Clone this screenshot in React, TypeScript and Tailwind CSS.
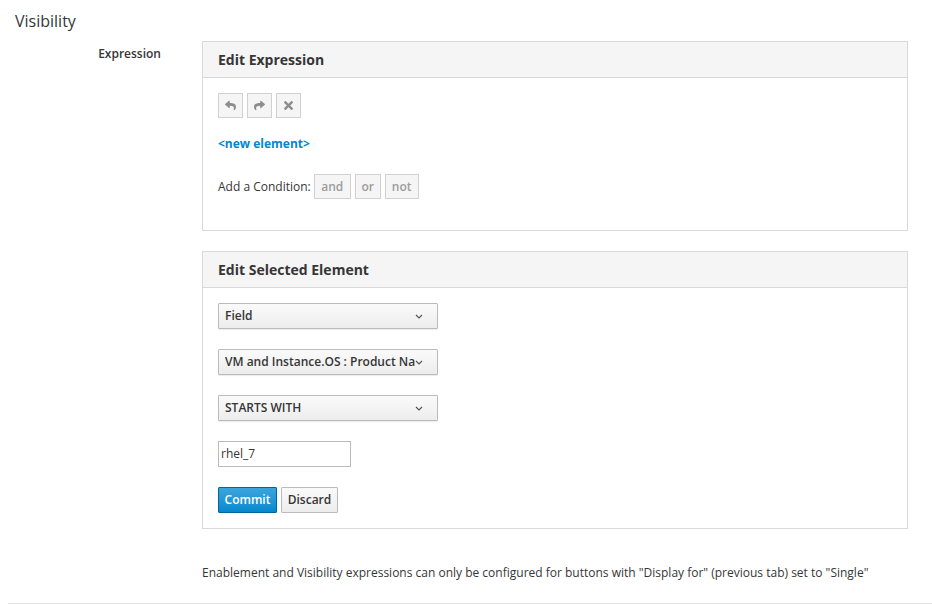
import { FaReply, FaShare, FaTimes } from "react-icons/fa";

const font = { fontFamily: '"Open Sans", "Liberation Sans", sans-serif' };

function Chevron() {
  return (
    <svg width="8" height="5" viewBox="0 0 8 5" className="shrink-0">
      <path d="M1 1 L4 4 L7 1" fill="none" stroke="#4d5258" strokeWidth="1.1" />
    </svg>
  );
}

function Dropdown({ label }: { label: string }) {
  return (
    <div className="flex h-[26px] w-[220px] items-center justify-between overflow-hidden rounded-[1px] border border-[#bbbbbb] bg-gradient-to-b from-[#fafafa] to-[#ededed] pl-[6px] pr-[14px] shadow-[0_1px_1px_rgba(3,3,3,0.08)]">
      <span className="overflow-hidden whitespace-nowrap text-[12px] font-semibold text-[#363636]">{label}</span>
      <Chevron />
    </div>
  );
}

function Panel({ title, children }: { title: string; children: React.ReactNode }) {
  return (
    <div className="w-[706px] border border-[#d9d9d9] bg-white">
      <div className="flex h-[36px] items-center border-b border-[#d9d9d9] bg-[#f5f5f5] px-[15px]">
        <h3 className="text-[14px] font-bold text-[#363636]">{title}</h3>
      </div>
      {children}
    </div>
  );
}

function IconBtn({ children }: { children: React.ReactNode }) {
  return (
    <div className="flex h-[25px] w-[25px] items-center justify-center border border-[#d1d1d1] bg-[#f5f5f5] text-[#8b8d8f]">
      {children}
    </div>
  );
}

function CondBtn({ label, w }: { label: string; w: string }) {
  return (
    <div className={`flex h-[25px] ${w} items-center justify-center border border-[#d1d1d1] bg-[#f5f5f5] text-[12px] font-semibold text-[#9c9c9c]`}>
      {label}
    </div>
  );
}

export default function App() {
  return (
    <div className="min-h-[605px] bg-white text-[#363636]" style={font}>
      <div className="px-[15px] pt-[9px]">
        <h2 className="text-[16px] leading-[24px] text-[#363636]">Visibility</h2>
      </div>

      <div className="mt-[8px] flex">
        <label className="w-[161px] pt-[4px] text-right text-[12px] font-semibold leading-[18px] text-[#363636]">Expression</label>
        <div className="ml-[41px] flex flex-col gap-[20px]">
          <Panel title="Edit Expression">
            <div className="px-[15px] pb-[31px] pt-[15px]">
              <div className="flex gap-[4px]">
                <IconBtn><FaReply size={11} /></IconBtn>
                <IconBtn><FaShare size={11} /></IconBtn>
                <IconBtn><FaTimes size={13} /></IconBtn>
              </div>
              <div className="mt-[18px] text-[12px] font-bold leading-[16px] text-[#0088ce]">&lt;new element&gt;</div>
              <div className="mt-[22px] flex items-center gap-[4px] text-[12px]">
                <span className="mr-[-1px]">Add a Condition:</span>
                <CondBtn label="and" w="w-[37px]" />
                <CondBtn label="or" w="w-[26px]" />
                <CondBtn label="not" w="w-[34px]" />
              </div>
            </div>
          </Panel>

          <Panel title="Edit Selected Element">
            <div className="flex flex-col gap-[20px] px-[15px] pb-[15px] pt-[15px]">
              <Dropdown label="Field" />
              <Dropdown label="VM and Instance.OS : Product Name" />
              <Dropdown label="STARTS WITH" />
              <div className="flex h-[26px] w-[133px] items-center border border-[#bbbbbb] bg-white px-[2px] text-[12px] text-[#363636]">
                rhel_7
              </div>
              <div className="flex gap-[4px]">
                <button className="h-[26px] w-[59px] rounded-[1px] border border-[#00659c] bg-gradient-to-b from-[#39a5dc] to-[#0088ce] text-[12px] font-semibold text-white">
                  Commit
                </button>
                <button className="h-[26px] w-[57px] rounded-[1px] border border-[#bbbbbb] bg-gradient-to-b from-[#fafafa] to-[#ededed] text-[12px] font-semibold text-[#363636]">
                  Discard
                </button>
              </div>
            </div>
          </Panel>

          <p className="mt-[15px] text-[12px] leading-[18px] text-[#363636]">
            Enablement and Visibility expressions can only be configured for buttons with "Display for" (previous tab) set to "Single"
          </p>
        </div>
      </div>

      <div className="ml-[8px] mt-[21px] border-t border-[#e5e5e5]" />
    </div>
  );
}
